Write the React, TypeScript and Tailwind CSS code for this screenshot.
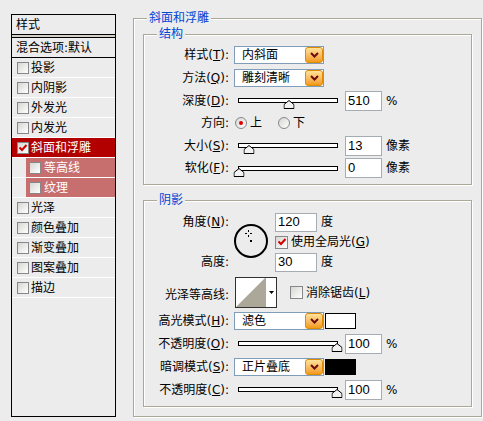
import React from "react";

const cjk = "font-['DejaVu_Sans','Noto_Sans_CJK_SC',sans-serif]";
const num = "font-['Liberation_Sans','Noto_Sans_CJK_SC',sans-serif]";

function Check({ checked = false, size = "w-[12px] h-[12px]" }: { checked?: boolean; size?: string }) {
  return (
    <span
      className={`${size} shrink-0 border border-[#85878a] bg-linear-to-br from-[#d6d6d2] to-white flex items-center justify-center`}
    >
      {checked && (
        <svg width="10" height="10" viewBox="0 0 10 10">
          <path d="M1.5 4.5 L4 7 L8.5 2" stroke="#d00000" strokeWidth="2" fill="none" />
        </svg>
      )}
    </span>
  );
}

function Radio({ checked = false }: { checked?: boolean }) {
  return (
    <span className="w-[12px] h-[12px] shrink-0 rounded-full border border-[#85878a] bg-linear-to-br from-[#d6d6d2] to-white flex items-center justify-center">
      {checked && <span className="w-[4px] h-[4px] rounded-full bg-[#e00000]" />}
    </span>
  );
}

function OrangeBtn() {
  return (
    <span className="w-[18px] h-[16px] shrink-0 rounded-[3px] border border-[#e08a00] bg-linear-to-b from-[#ffe29a] to-[#f29a10] flex items-center justify-center">
      <svg width="9" height="6" viewBox="0 0 9 6">
        <path d="M1 1 L4.5 4.5 L8 1" stroke="#6b0d0d" strokeWidth="2" fill="none" />
      </svg>
    </span>
  );
}

function Select({ value }: { value: string }) {
  return (
    <div className="w-[90px] h-[18px] border border-[#7f9db9] bg-white flex items-center">
      <span className="flex-1 pl-[7px]">{value}</span>
      <OrangeBtn />
    </div>
  );
}

function Input({ value, w = "w-[37px]", h = "h-[20px]" }: { value: string; w?: string; h?: string }) {
  return (
    <div className={`${w} ${h} shrink-0 border border-[#a5acb2] bg-white flex items-center pl-[2px] text-[13px] ${num}`}>
      {value}
    </div>
  );
}

function Slider({ frac }: { frac: number }) {
  return (
    <div className="pl-[4px] w-[104px] shrink-0">
      <div className="relative w-[100px] h-[5px] border border-black bg-white">
        <svg
          className="absolute top-[1px] -translate-x-1/2"
          style={{ left: `${frac * 100}%` }}
          width="11"
          height="9"
          viewBox="0 0 11 9"
        >
          <polygon points="0.5,8.5 0.5,4.5 5.5,0.5 10.5,4.5 10.5,8.5" fill="#f2f2f2" stroke="#000" strokeWidth="1" />
        </svg>
      </div>
    </div>
  );
}

function Label({ children, className = "" }: { children: React.ReactNode; className?: string }) {
  return <div className={`w-[85px] shrink-0 text-right whitespace-nowrap ${className}`}>{children}</div>;
}

function GroupBox({ title, className, children }: { title: string; className: string; children: React.ReactNode }) {
  return (
    <div className={`relative border border-[#aca899] shadow-[inset_1px_1px_0_#fff,1px_1px_0_#fff] ${className}`}>
      <span className="absolute -top-[8px] left-[13px] px-[2px] bg-[#ececec] leading-[14px] text-[#0046d5]">{title}</span>
      {children}
    </div>
  );
}

const styles = [
  { t: "投影" },
  { t: "内阴影" },
  { t: "外发光" },
  { t: "内发光" },
  { t: "斜面和浮雕", sel: true },
  { t: "等高线", sub: true },
  { t: "纹理", sub: true },
  { t: "光泽" },
  { t: "颜色叠加" },
  { t: "渐变叠加" },
  { t: "图案叠加" },
  { t: "描边" },
];

function StyleList() {
  return (
    <div className="ml-[11px] mt-[14px] w-[105px] h-[403px] border border-black flex flex-col shrink-0">
      <div className="h-[19px] flex items-center pl-[4px]">样式</div>
      <div className="h-[4px] border-y border-black bg-[#d4d0c8]" />
      <div className="h-[20px] border-b border-black flex items-center pl-[4px] whitespace-nowrap">混合选项:默认</div>
      {styles.map((s) =>
        s.sub ? (
          <div key={s.t} className="h-[20px] border-b border-white flex">
            <div className="ml-[14px] flex-1 bg-[#c76e6e] text-white flex items-center pl-[3px]">
              <Check />
              <span className="ml-[3px]">{s.t}</span>
            </div>
          </div>
        ) : (
          <div
            key={s.t}
            className={`h-[20px] border-b border-white flex items-center pl-[5px] ${s.sel ? "bg-[#b20000] text-white" : ""}`}
          >
            <Check checked={!!s.sel} />
            <span className="ml-[2px]">{s.t}</span>
          </div>
        )
      )}
    </div>
  );
}

export default function App() {
  return (
    <div className={`w-[483px] h-[421px] bg-[#ececec] flex items-start text-black text-[12px] leading-[14px] ${cjk}`}>
      <StyleList />
      <GroupBox title="斜面和浮雕" className="ml-[17px] mt-[18px] w-[349px] h-[399px] pt-[15px] pl-[9px]">
        <GroupBox title="结构" className="w-[329px] h-[151px] pt-[9px]">
          <div className="flex items-center h-[22px]">
            <Label>样式(<u>T</u>):</Label>
            <div className="ml-[5px]"><Select value="内斜面" /></div>
          </div>
          <div className="flex items-center h-[23px]">
            <Label>方法(<u>Q</u>):</Label>
            <div className="ml-[5px]"><Select value="雕刻清晰" /></div>
          </div>
          <div className="flex items-center h-[23px]">
            <Label>深度(<u>D</u>):</Label>
            <div className="ml-[5px] flex items-center">
              <Slider frac={0.51} />
              <div className="ml-[7px]"><Input value="510" /></div>
              <span className="ml-[4px]">%</span>
            </div>
          </div>
          <div className="flex items-center h-[22px]">
            <Label>方向:</Label>
            <div className="ml-[6px] flex items-center">
              <Radio checked />
              <span className="ml-[3px]">上</span>
              <span className="ml-[16px]"><Radio /></span>
              <span className="ml-[3px]">下</span>
            </div>
          </div>
          <div className="flex items-center h-[23px]">
            <Label>大小(<u>S</u>):</Label>
            <div className="ml-[5px] flex items-center">
              <Slider frac={0.1} />
              <div className="ml-[7px]"><Input value="13" /></div>
              <span className="ml-[4px]">像素</span>
            </div>
          </div>
          <div className="flex items-center h-[22px]">
            <Label>软化(<u>F</u>):</Label>
            <div className="ml-[5px] flex items-center">
              <Slider frac={0} />
              <div className="ml-[7px]"><Input value="0" /></div>
              <span className="ml-[4px]">像素</span>
            </div>
          </div>
        </GroupBox>

        <GroupBox title="阴影" className="mt-[15px] w-[329px] h-[207px] pt-[11px]">
          <div className="flex">
            <div className="w-[85px] shrink-0 flex flex-col">
              <div className="h-[20px] flex items-center justify-end">角度(<u>N</u>):</div>
              <div className="h-[20px]" />
              <div className="h-[20px] flex items-center justify-end">高度:</div>
            </div>
            <div className="ml-[5px] mt-[12px] relative w-[34px] h-[34px] rounded-full border-2 border-black">
              <svg className="absolute left-[9px] top-[4px]" width="7" height="7" viewBox="0 0 7 7">
                <path d="M3.5 0 V2 M3.5 5 V7 M0 3.5 H2 M5 3.5 H7" stroke="#000" strokeWidth="1" />
              </svg>
              <span className="absolute left-[14px] top-[14px] w-[2px] h-[2px] bg-black" />
            </div>
            <div className="ml-[7px] flex flex-col">
              <div className="h-[20px] flex items-center">
                <Input value="120" w="w-[42px]" h="h-[19px]" />
                <span className="ml-[4px]">度</span>
              </div>
              <div className="h-[20px] flex items-center">
                <Check checked size="w-[13px] h-[13px]" />
                <span className="ml-[3px] whitespace-nowrap">使用全局光(<u>G</u>)</span>
              </div>
              <div className="h-[20px] flex items-center">
                <Input value="30" w="w-[42px]" h="h-[19px]" />
                <span className="ml-[4px]">度</span>
              </div>
            </div>
          </div>

          <div className="mt-[5px] flex items-center h-[31px]">
            <Label className="pt-[5px]">光泽等高线:</Label>
            <div className="ml-[6px] w-[42px] h-[31px] border border-[#303030] bg-white flex">
              <svg width="29" height="29" viewBox="0 0 29 29">
                <polygon points="0,29 29,0 29,29" fill="#aca899" />
              </svg>
              <div className="w-[11px] border-l border-[#aca899] flex items-center justify-center">
                <svg width="5" height="3" viewBox="0 0 5 3">
                  <polygon points="0,0 5,0 2.5,3" fill="#000" />
                </svg>
              </div>
            </div>
            <div className="ml-[13px] flex items-center">
              <Check size="w-[13px] h-[13px]" />
              <span className="ml-[3px] whitespace-nowrap">消除锯齿(<u>L</u>)</span>
            </div>
          </div>

          <div className="mt-[2px] flex items-center h-[22px]">
            <Label>高光模式(<u>H</u>):</Label>
            <div className="ml-[5px] flex items-center">
              <Select value="滤色" />
              <span className="ml-[1px] w-[31px] h-[16px] border border-black bg-white" />
            </div>
          </div>
          <div className="flex items-center h-[23px]">
            <Label>不透明度(<u>O</u>):</Label>
            <div className="ml-[5px] flex items-center">
              <Slider frac={1} />
              <div className="ml-[7px]"><Input value="100" /></div>
              <span className="ml-[4px]">%</span>
            </div>
          </div>
          <div className="flex items-center h-[23px]">
            <Label>暗调模式(<u>S</u>):</Label>
            <div className="ml-[5px] flex items-center">
              <Select value="正片叠底" />
              <span className="ml-[1px] w-[31px] h-[16px] border border-black bg-black" />
            </div>
          </div>
          <div className="flex items-center h-[23px]">
            <Label>不透明度(<u>C</u>):</Label>
            <div className="ml-[5px] flex items-center">
              <Slider frac={1} />
              <div className="ml-[7px]"><Input value="100" /></div>
              <span className="ml-[4px]">%</span>
            </div>
          </div>
        </GroupBox>
      </GroupBox>
    </div>
  );
}
